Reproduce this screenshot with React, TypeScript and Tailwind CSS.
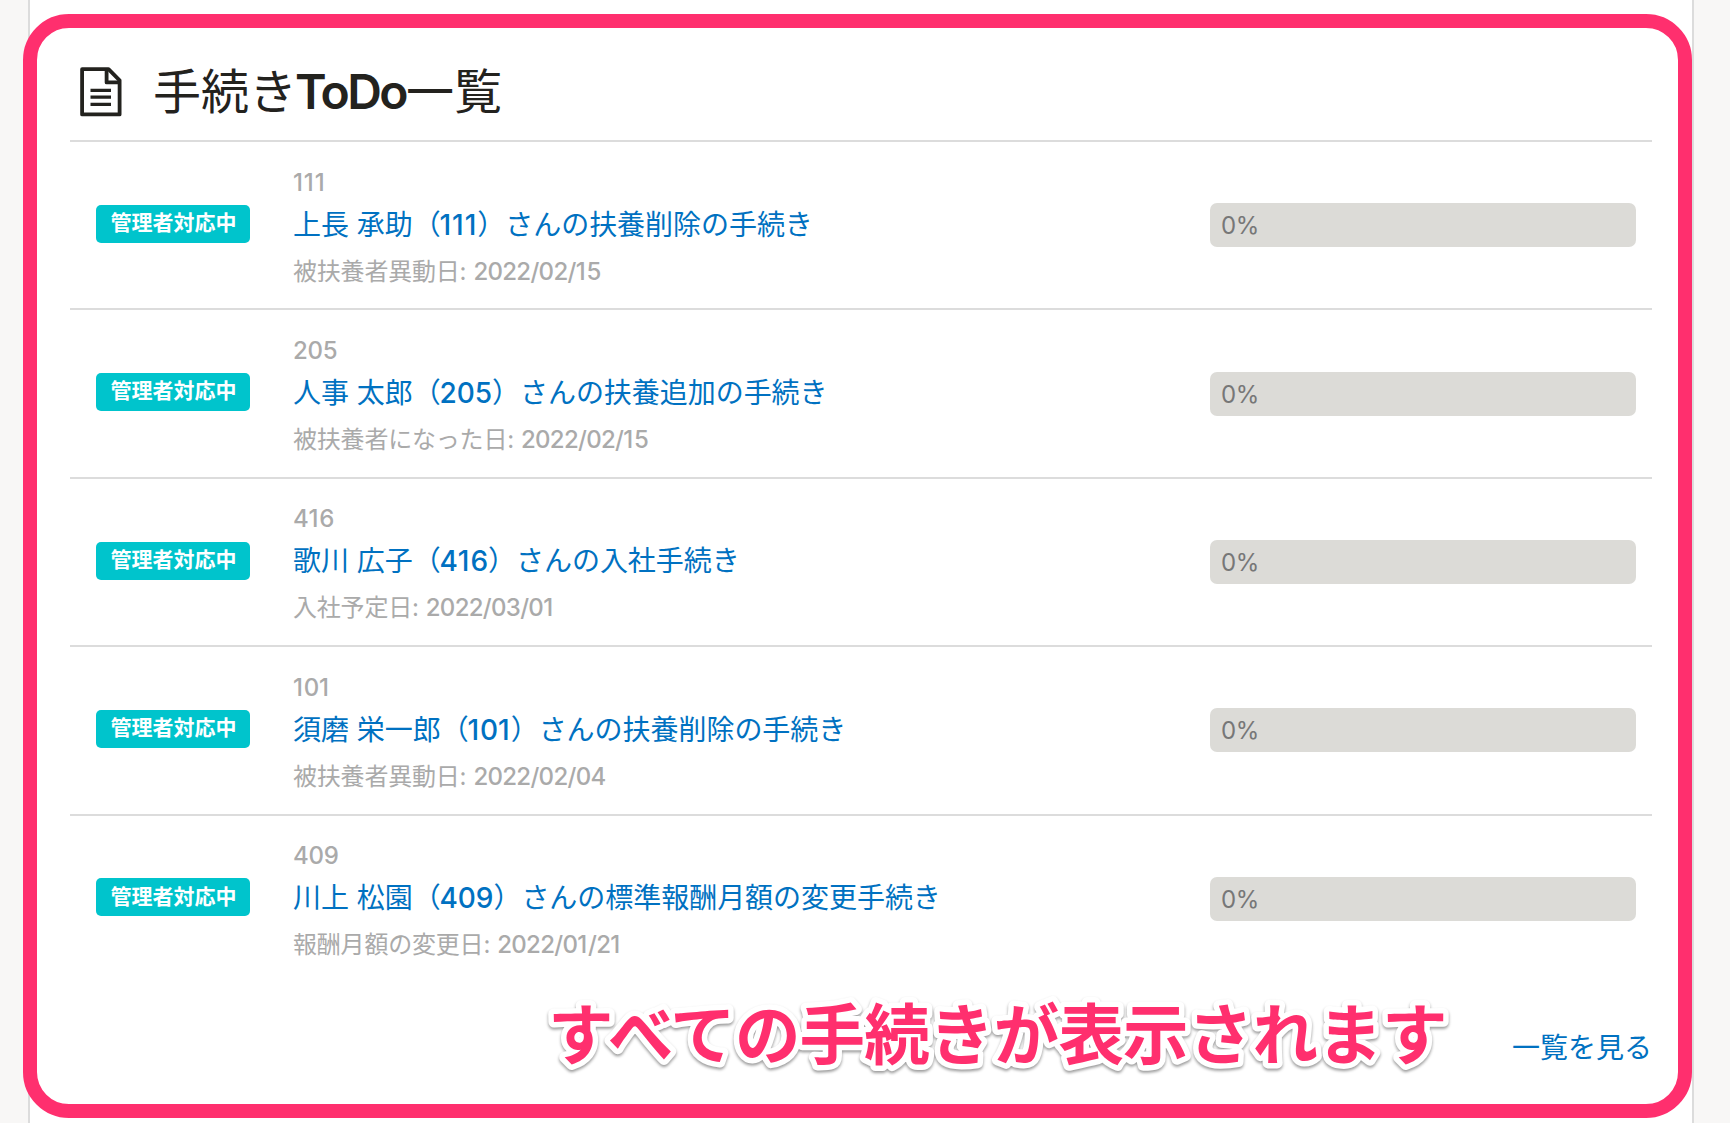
type Todo = { id: string; name: string; rest: string; dateLabel: string; date: string };

const todos: Todo[] = [
  { id: '111', name: '上長 承助', rest: 'さんの扶養削除の手続き', dateLabel: '被扶養者異動日', date: '2022/02/15' },
  { id: '205', name: '人事 太郎', rest: 'さんの扶養追加の手続き', dateLabel: '被扶養者になった日', date: '2022/02/15' },
  { id: '416', name: '歌川 広子', rest: 'さんの入社手続き', dateLabel: '入社予定日', date: '2022/03/01' },
  { id: '101', name: '須磨 栄一郎', rest: 'さんの扶養削除の手続き', dateLabel: '被扶養者異動日', date: '2022/02/04' },
  { id: '409', name: '川上 松園', rest: 'さんの標準報酬月額の変更手続き', dateLabel: '報酬月額の変更日', date: '2022/01/21' },
];

function DocumentIcon() {
  return (
    <svg width="42" height="50" viewBox="0 0 42 50" fill="none" stroke="#23221e" strokeWidth="3.8" strokeLinejoin="round">
      <path d="M2.1 2.2H28.5L39.6 13.3V47.4H2.1Z" />
      <path d="M26.6 2.2V15.4H39.6" />
      <path d="M10.5 23.3H31M10.5 30.2H31M10.5 37.3H31" strokeWidth="3.2" />
    </svg>
  );
}

// Gives the narrow "1" a little more room than the other digits.
function Digits({ value }: { value: string }) {
  return (
    <>
      {value.split(/(1)/).map((part, i) =>
        part === '1' ? (
          <span key={i} className="tracking-[0.035em]">
            1
          </span>
        ) : (
          part
        ),
      )}
    </>
  );
}

function TodoRow({ todo }: { todo: Todo }) {
  return (
    <li className="flex h-[168.45px] items-center border-t-2 border-[#dcdcdc] pl-[26px] pr-4">
      <span className="mb-[2.8px] flex h-[38px] w-[154px] shrink-0 items-center justify-center rounded-[5px] bg-[#00c4cc] pb-0.5 pl-px text-[21px] font-bold text-white">
        管理者対応中
      </span>
      <div className="ml-[43px] flex-1 whitespace-nowrap pt-1 text-2xl text-[#aaaaaa]">
        <p className="font-medium leading-[36px] tracking-[-0.25px]">
          <Digits value={todo.id} />
        </p>
        <p className="mb-2 mt-1 text-[28px] leading-[41px] tracking-[-0.04px] text-[#0071c1]">
          {todo.name}（
          <span className="-ml-[1.2px] font-medium">
            <Digits value={todo.id} />
          </span>
          ）{todo.rest}
        </p>
        <p className="leading-[36px] tracking-[-0.2px]">
          {todo.dateLabel}:{' '}
          <span className="ml-[0.5px] font-medium tracking-[-0.7px]">
            <Digits value={todo.date} />
          </span>
        </p>
      </div>
      <div className="flex h-11 w-[426px] items-center rounded-[7px] bg-[#dcdbd7] pl-[11px] pt-0.5 text-2xl tracking-[-0.4px] text-[#777777]">
        0%
      </div>
    </li>
  );
}

function Callout() {
  return (
    <svg className="absolute left-[530px] top-[980px] overflow-visible drop-shadow-[0_2px_1.5px_rgba(0,0,0,0.4)]" width="940" height="110">
      <text
        x="18"
        y="79"
        className="text-[65.5px] font-bold tracking-[-0.8px]"
        fill="#ff2f6e"
        stroke="#ffffff"
        strokeWidth="11"
        strokeLinejoin="round"
        paintOrder="stroke"
      >
        すべての手続きが表示されます
      </text>
    </svg>
  );
}

export default function App() {
  return (
    <div
      lang="ja"
      className='relative h-[1123px] w-[1730px] overflow-hidden bg-[#f8f7f6] px-7 font-["Inter","Noto_Sans_CJK_JP",sans-serif]'
    >
      <main className="h-full w-[1666px] border-x-2 border-[#dcdcdc] bg-white px-10">
        <header className="flex h-[139.85px] items-center pl-2.5 pt-11">
          <DocumentIcon />
          <h1 className="ml-[31px] text-[48px] leading-[72px] text-[#23221e]">
            手続き<span className="-ml-0.5 font-semibold tracking-[-2.5px]">ToDo</span>一覧
          </h1>
        </header>
        <ul>
          {todos.map((todo) => (
            <TodoRow key={todo.id} todo={todo} />
          ))}
        </ul>
        <footer className="flex justify-end pt-[45px]">
          <a className="text-[28px] leading-[42px] text-[#0071c1]">一覧を見る</a>
        </footer>
      </main>
      <div className="absolute left-[22.7px] top-[13.6px] h-[1104px] w-[1669.4px] rounded-[46px] border-[14px] border-[#ff2f6e]" />
      <Callout />
    </div>
  );
}
